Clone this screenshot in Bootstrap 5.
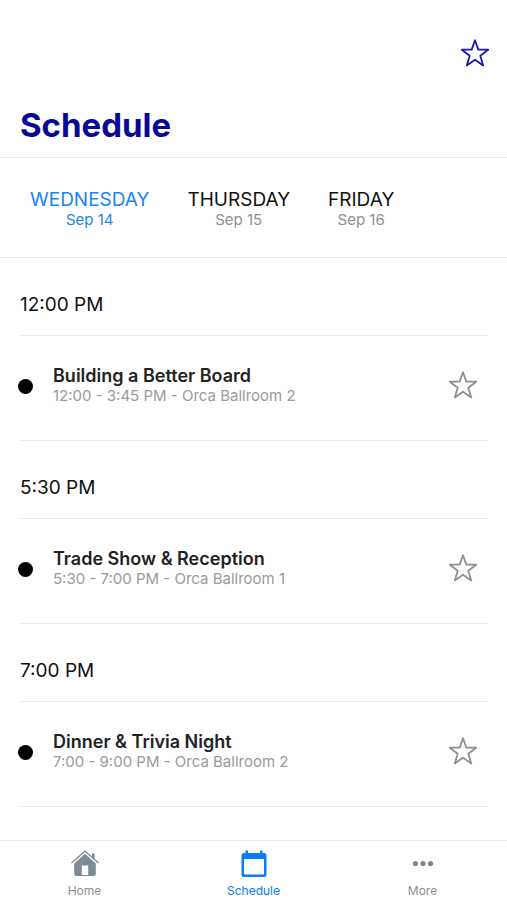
<!DOCTYPE html>
<html lang="en">
<head>
<meta charset="utf-8">
<meta name="viewport" content="width=device-width, initial-scale=1">
<title>Schedule</title>
<link href="https://cdn.jsdelivr.net/npm/bootstrap@5.3.0/dist/css/bootstrap.min.css" rel="stylesheet">
<style>
  body { font-family: Inter, "Liberation Sans", sans-serif; color: #111; background: #fff; }
  .hairline { border-color: #ebebeb !important; }
  .page-head { padding: 38px 17px 12px 20px; }
  .page-title { font-size: 33px; line-height: 40px; font-weight: 700; color: #08089a; margin-top: 37px; }
  .icon-btn { line-height: 0; color: #8e8e93; }
  .icon-btn:hover { color: inherit; }
  .icon-btn.brand { color: #1a1aa6; }
  .days { padding: 31px 20px 28px; gap: 18px; }
  .day { padding: 0 10px; color: #111; border: 0; background: none; }
  .day-name { font-size: 19px; line-height: 22px; }
  .day-date { font-size: 15px; line-height: 18px; color: #8f8f8f; }
  .day.current, .day.current .day-date { color: #1a84f5; }
  .slots { padding: 0 19px 0 20px; }
  .slot-time { font-size: 19px; line-height: 24px; padding: 35px 0 18px; }
  .session { padding: 29px 10px 35px 0; }
  .bullet { width: 15px; height: 15px; background: #000; margin: 3px 20px 0 -2px; }
  .session-title { font-size: 18px; line-height: 22px; font-weight: 600; color: #222; }
  .session-meta { font-size: 15px; line-height: 18px; color: #9a9a9a; }
  .tabs-bottom { background: #fff; }
  .tab { padding: 8px 0 0; height: 59px; font-size: 12px; line-height: 16px; color: #8a9196; text-decoration: none; }
  .tab svg { margin-bottom: 4px; }
  .tab.current { color: #0a7cf7; }
</style>
<script src="https://cdn.jsdelivr.net/npm/bootstrap@5.3.0/dist/js/bootstrap.bundle.min.js" defer></script>
</head>
<body class="d-flex flex-column min-vh-100">
<svg class="d-none" aria-hidden="true">
  <symbol id="star" viewBox="0 0 30 30"><path d="M15 2.2 18.3 11.6 28.2 11.7 20.3 17.7 23.2 27.4 15 21.7 6.8 27.4 9.7 17.7 1.8 11.7 11.7 11.6Z" fill="none" stroke="currentColor" stroke-width="1.8" stroke-linejoin="round"/></symbol>
</svg>

<header class="page-head border-bottom hairline">
  <div class="d-flex justify-content-end">
    <button type="button" class="btn border-0 p-0 icon-btn brand" aria-label="Favorites"><svg width="30" height="30"><use href="#star"/></svg></button>
  </div>
  <h1 class="page-title mb-0">Schedule</h1>
</header>

<nav class="days d-flex border-bottom hairline" aria-label="Days">
  <button type="button" class="day current text-center" aria-current="date"><span class="day-name d-block">WEDNESDAY</span><span class="day-date d-block">Sep 14</span></button>
  <button type="button" class="day text-center"><span class="day-name d-block">THURSDAY</span><span class="day-date d-block">Sep 15</span></button>
  <button type="button" class="day text-center"><span class="day-name d-block">FRIDAY</span><span class="day-date d-block">Sep 16</span></button>
</nav>

<main class="slots flex-grow-1">
  <section>
    <h2 class="slot-time fw-normal mb-0 border-bottom hairline">12:00 PM</h2>
    <div class="session d-flex align-items-center border-bottom hairline">
      <span class="bullet rounded-circle flex-shrink-0"></span>
      <div class="flex-grow-1"><div class="session-title">Building a Better Board</div><div class="session-meta">12:00 - 3:45 PM - Orca Ballroom 2</div></div>
      <button type="button" class="btn border-0 p-0 icon-btn" aria-label="Favorite Building a Better Board"><svg width="30" height="30"><use href="#star"/></svg></button>
    </div>
  </section>
  <section>
    <h2 class="slot-time fw-normal mb-0 border-bottom hairline">5:30 PM</h2>
    <div class="session d-flex align-items-center border-bottom hairline">
      <span class="bullet rounded-circle flex-shrink-0"></span>
      <div class="flex-grow-1"><div class="session-title">Trade Show &amp; Reception</div><div class="session-meta">5:30 - 7:00 PM - Orca Ballroom 1</div></div>
      <button type="button" class="btn border-0 p-0 icon-btn" aria-label="Favorite Trade Show &amp; Reception"><svg width="30" height="30"><use href="#star"/></svg></button>
    </div>
  </section>
  <section>
    <h2 class="slot-time fw-normal mb-0 border-bottom hairline">7:00 PM</h2>
    <div class="session d-flex align-items-center border-bottom hairline">
      <span class="bullet rounded-circle flex-shrink-0"></span>
      <div class="flex-grow-1"><div class="session-title">Dinner &amp; Trivia Night</div><div class="session-meta">7:00 - 9:00 PM - Orca Ballroom 2</div></div>
      <button type="button" class="btn border-0 p-0 icon-btn" aria-label="Favorite Dinner &amp; Trivia Night"><svg width="30" height="30"><use href="#star"/></svg></button>
    </div>
  </section>
</main>

<footer class="tabs-bottom sticky-bottom border-top hairline">
  <nav class="d-flex" aria-label="Main">
    <a href="#home" class="tab flex-fill w-100 d-flex flex-column align-items-center">
      <svg width="30" height="30" viewBox="0 0 30 30" aria-hidden="true"><path d="M15 4.800 25.800 14.500V24.500q0 2.500-2.500 2.500H6.700q-2.500 0-2.500-2.500V14.500ZM11.800 16.500v9.500h6.400v-9.500Z" fill="#7d8b94" fill-rule="evenodd"/><path d="M1.500 14 15 2.200 28.500 14" fill="none" stroke="#7d8b94" stroke-width="1.300"/><path d="M22 4.500h2.600V10l-2.600-2.300Z" fill="#7d8b94"/></svg>
      <span>Home</span>
    </a>
    <a href="#schedule" class="tab current flex-fill w-100 d-flex flex-column align-items-center" aria-current="page">
      <svg width="30" height="30" viewBox="0 0 30 30" aria-hidden="true"><path d="M5 4h1.500V1.500h2.500V4h12V1.500h2.500V4H25q2.500 0 2.500 2.500v19Q27.500 28 25 28H5q-2.500 0-2.500-2.500v-19Q2.500 4 5 4Zm0 6v14.500q0 1 1 1h18q1 0 1-1V10Z" fill="currentColor" fill-rule="evenodd"/></svg>
      <span>Schedule</span>
    </a>
    <a href="#more" class="tab flex-fill w-100 d-flex flex-column align-items-center">
      <svg width="30" height="30" viewBox="0 0 30 30" aria-hidden="true"><g fill="#7d8589"><circle cx="7.500" cy="14.500" r="2.600"/><circle cx="15" cy="14.500" r="2.600"/><circle cx="22.500" cy="14.500" r="2.600"/></g></svg>
      <span>More</span>
    </a>
  </nav>
</footer>
</body>
</html>
